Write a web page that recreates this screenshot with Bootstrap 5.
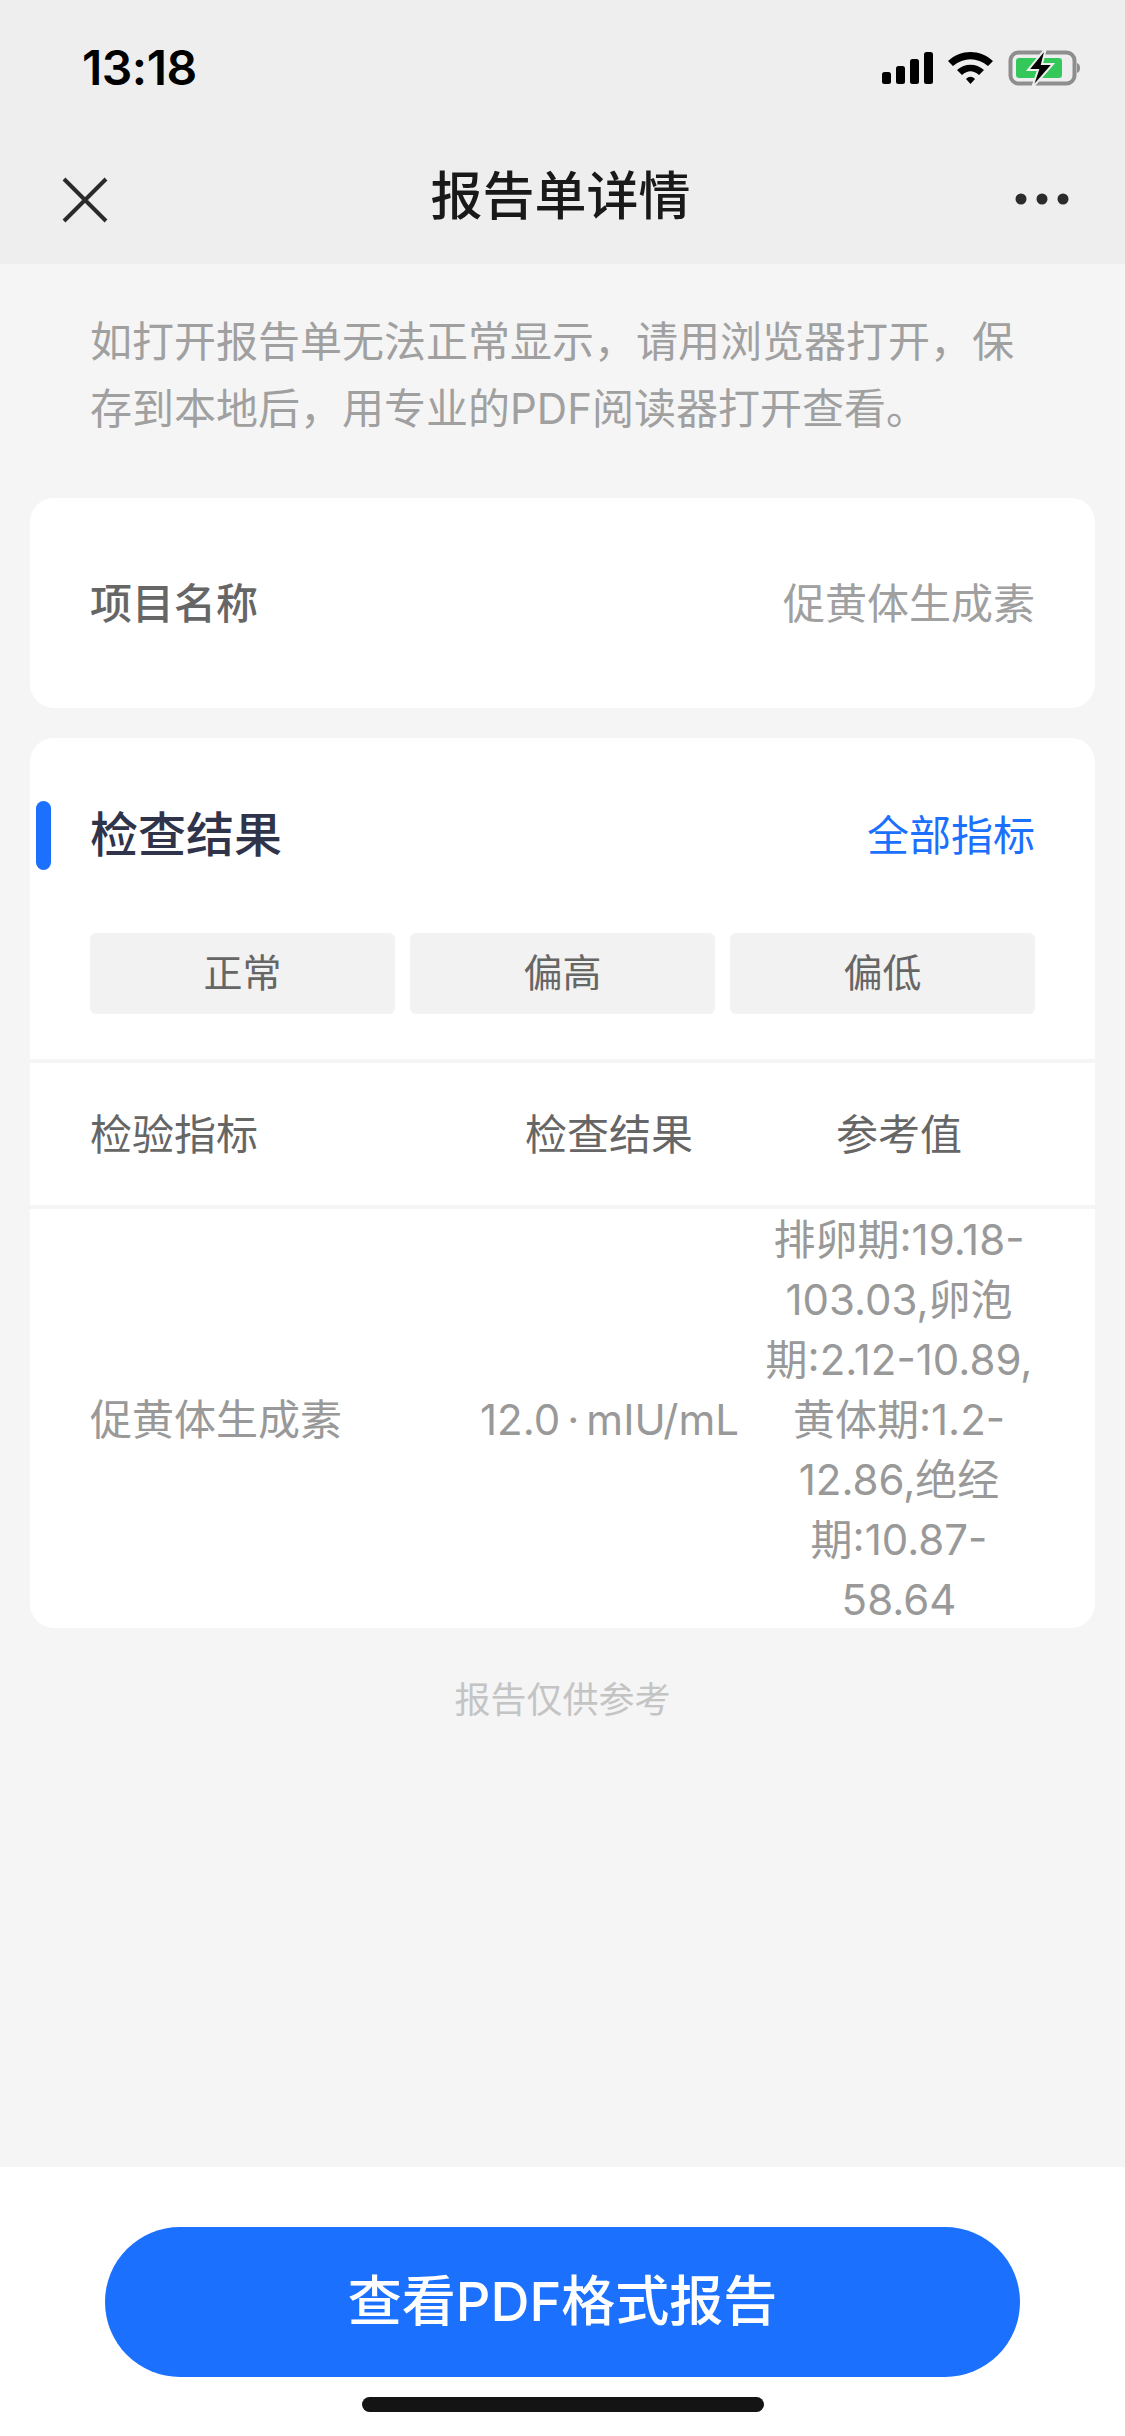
<!DOCTYPE html>
<html lang="zh-CN">
<head>
  <meta charset="UTF-8">
  <title>报告单详情</title>
  <link href="https://cdn.jsdelivr.net/npm/bootstrap@5.3.3/dist/css/bootstrap.min.css" rel="stylesheet">
  <meta name="viewport" content="width=device-width, initial-scale=1">

<style>
  body {
    background-color: #f5f5f5;
    font-family: Inter, "Noto Sans CJK SC", "Liberation Sans", sans-serif;
    font-size: 42px;
    width: 1125px;
    height: 2436px;
    overflow: hidden;
  }
  .top-area { background-color: #eeeeee; height: 264px; }
  .status-row { height: 136px; padding: 0 43px 0 82px; }
  .status-time { font-size: 48px; font-weight: 600; color: #000; letter-spacing: -0.5px; }
  .title-row { height: 128px; padding: 0 56px 0 62px; }
  .more-dots { margin-top: -3px; }
  .page-title { font-size: 52px; font-weight: 500; color: #191919; line-height: 1; margin-top: -3px; margin-left: -2px; }
  .notice-text { color: #a0a0a0; line-height: 67px; padding: 44px 90px 0; height: 234px; margin: 0; }
  .white-card { background: #fff; border-radius: 24px; margin: 0 30px; }
  .name-card { height: 210px; margin-bottom: 30px; padding: 0 60px; }
  .name-label { font-weight: 500; color: #666; }
  .name-value { color: #a0a0a0; }
  .result-card { height: 890px; }
  .result-head { height: 195px; padding: 0 60px 1px; }
  .side-bar { width: 15px; height: 69px; left: 6px; top: 63px; background: #1b70fe; border-radius: 8px; }
  .result-title { font-size: 48px; font-weight: 500; color: #2f344a; }
  .all-link { color: #1b70fe; text-decoration: none; }
  .tag-row { padding: 0 60px; gap: 15px; height: 126px; }
  .tag-item { flex: 1; height: 81px; background: #f2f2f2; border-radius: 6px; color: #666; font-size: 39px; }
  .line-gray { height: 4px; background: #f5f5f5; }
  .grid-row { display: grid; grid-template-columns: 390px 258px 297px; padding: 0 60px; }
  .grid-row > div:last-child { margin-left: 25px; width: 272px; }
  .head-row { height: 142px; color: #666; align-items: center; }
  .body-row { color: #999; line-height: 60px; align-items: center; margin-top: 1px; }
  .col-mid { white-space: nowrap; }
  .dot-gap { margin: 0 7px; }
  .col-ref { word-break: break-word; }
  .foot-note { color: #c4c4c4; font-size: 36px; margin-top: 47px; line-height: 50px; }
  .bottom-area { left: 0; right: 0; top: 2167px; height: 269px; background: #fff; }
  .pdf-btn { left: 105px; top: 60px; width: 915px; height: 150px; border-radius: 75px; background: #1b70fe; color: #fff; font-size: 54px; font-weight: 500; border: 0; padding-bottom: 8px; }
  .home-line { left: 362px; top: 230px; width: 402px; height: 15px; background: #141414; border-radius: 8px; }
</style>

</head>
<body>

  <div class="top-area">
    <div class="status-row d-flex align-items-center justify-content-between">
      <span class="status-time">13:18</span>
      <svg width="200" height="36" viewBox="0 0 200 36">
        <rect x="0" y="22" width="9" height="12" rx="2.5"/>
        <rect x="14" y="16" width="9" height="18" rx="2.5"/>
        <rect x="28" y="9" width="9" height="25" rx="2.5"/>
        <rect x="42" y="2" width="9" height="32" rx="2.5"/>
        <path d="M66 11 C79 -1 98 -1 111 11 L106 16 C95 7 82 7 71 16 Z"/>
        <path d="M75 20 C83 13 94 13 102 20 L97 25 C91 20 86 20 80 25 Z"/>
        <path d="M84 29 C87 26 90 26 93 29 L88.500 34 Z"/>
        <rect x="128.500" y="2.500" width="64" height="31" rx="8" fill="none" stroke="#8e8e8e" stroke-width="4"/>
        <rect x="134" y="8" width="46" height="20" rx="3" fill="#34c759"/>
        <path d="M195 13 C199 14 199 22 195 23 Z" fill="#8e8e8e"/>
        <path d="M164 -2 L146 20 L156 20 L150 38 L171 14 L160 14 Z" fill="#000" stroke="#eeeeee" stroke-width="2"/>
      </svg>
    </div>
    <div class="title-row d-flex align-items-center justify-content-between position-relative">
      <svg width="46" height="46" viewBox="0 0 46 46"><path d="M2 2 L44 44 M44 2 L2 44" stroke="#2b2b2b" stroke-width="4" fill="none"/></svg>
      <span class="page-title position-absolute top-50 start-50 translate-middle">报告单详情</span>
      <svg class="more-dots" width="54" height="12" viewBox="0 0 54 12" fill="#2b2b2b"><circle cx="6" cy="6" r="5.500"/><circle cx="27" cy="6" r="5.500"/><circle cx="48" cy="6" r="5.500"/></svg>
    </div>
  </div>

  <p class="notice-text">如打开报告单无法正常显示，请用浏览器打开，保存到本地后，用专业的PDF阅读器打开查看。</p>

  <div class="white-card name-card d-flex align-items-center justify-content-between">
    <span class="name-label">项目名称</span>
    <span class="name-value">促黄体生成素</span>
  </div>

  <div class="white-card result-card position-relative">
    <div class="side-bar position-absolute"></div>
    <div class="result-head d-flex align-items-center justify-content-between">
      <span class="result-title">检查结果</span>
      <a class="all-link" href="#">全部指标</a>
    </div>
    <div class="tag-row d-flex">
      <div class="tag-item d-flex align-items-center justify-content-center">正常</div>
      <div class="tag-item d-flex align-items-center justify-content-center">偏高</div>
      <div class="tag-item d-flex align-items-center justify-content-center">偏低</div>
    </div>
    <div class="line-gray"></div>
    <div class="grid-row head-row">
      <div>检验指标</div>
      <div class="text-center">检查结果</div>
      <div class="text-center">参考值</div>
    </div>
    <div class="line-gray"></div>
    <div class="grid-row body-row">
      <div>促黄体生成素</div>
      <div class="col-mid text-center">12.0<span class="dot-gap">·</span>mIU/mL</div>
      <div class="col-ref text-center">排卵期:19.18-103.03,卵泡期:2.12-10.89,黄体期:1.2-12.86,绝经期:10.87-58.64</div>
    </div>
  </div>

  <div class="foot-note text-center">报告仅供参考</div>

  <div class="bottom-area position-absolute">
    <button class="pdf-btn btn position-absolute d-flex align-items-center justify-content-center" type="button">查看PDF格式报告</button>
    <div class="home-line position-absolute"></div>
  </div>

  <script src="https://cdn.jsdelivr.net/npm/bootstrap@5.3.3/dist/js/bootstrap.bundle.min.js"></script>
</body>
</html>
